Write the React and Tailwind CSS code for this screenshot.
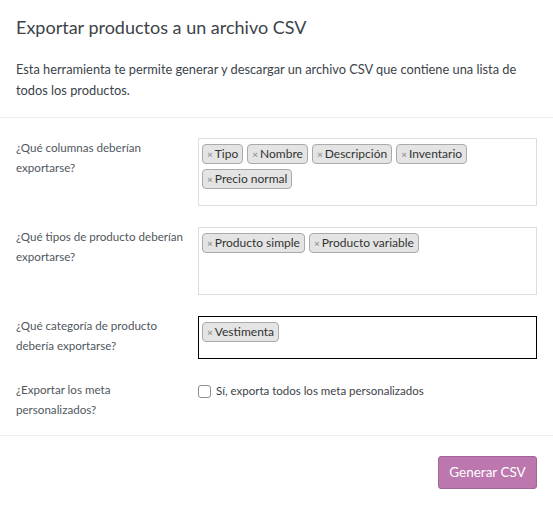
const Tag = ({ children }) => (
  <li className="flex items-center h-5 mr-1 mt-[5px] pl-1 pr-1 bg-[#e4e4e4] border border-[#aaa] rounded text-[12px] leading-none text-[#333] whitespace-nowrap">
    <span className="mr-[2px] text-[10px] text-[#999] font-bold">×</span>
    {children}
  </li>
)

const Field = ({ label, h, focused, tags }) => (
  <div className="flex">
    <div className="w-[182px] shrink-0 text-[11.6px] leading-5 text-[#50575e] whitespace-nowrap">{label}</div>
    <ul
      className={`flex flex-wrap content-start flex-1 pl-[3px] ${h} border ${
        focused ? 'border-black' : 'border-[#ddd]'
      }`}
    >
      {tags.map((t) => (
        <Tag key={t}>{t}</Tag>
      ))}
    </ul>
  </div>
)

export default function App() {
  return (
    <div className="w-[553px] h-[505px] bg-white font-['Lato',sans-serif]">
      <header className="px-4 pt-[13px] pb-4 border-b border-[#eee]">
        <h2 className="text-[18px] leading-7 text-[#3c434a] whitespace-nowrap">Exportar productos a un archivo CSV</h2>
        <p className="mt-[18px] text-[12.8px] leading-[21px] text-[#3c434a] whitespace-nowrap">
          Esta herramienta te permite generar y descargar un archivo CSV que contiene una lista de
          <br />
          todos los productos.
        </p>
      </header>

      <section className="flex flex-col gap-[21px] px-4 pt-5 pb-[15px] border-b border-[#eee]">
        <Field
          label={<>¿Qué columnas deberían<br />exportarse?</>}
          h="h-[68px]"
          tags={['Tipo', 'Nombre', 'Descripción', 'Inventario', 'Precio normal']}
        />
        <Field
          label={<>¿Qué tipos de producto deberían<br />exportarse?</>}
          h="h-[68px]"
          tags={['Producto simple', 'Producto variable']}
        />
        <Field
          label={<>¿Qué categoría de producto<br />debería exportarse?</>}
          h="h-[43px]"
          focused
          tags={['Vestimenta']}
        />
        <div className="flex">
          <div className="w-[182px] shrink-0 text-[11.6px] leading-5 text-[#50575e] whitespace-nowrap">
            ¿Exportar los meta
            <br />
            personalizados?
          </div>
          <label className="flex items-center gap-[5px] h-[22px] text-[11.5px] text-[#3c434a] whitespace-nowrap">
            <span className="w-[13px] h-[13px] border border-[#8c8f94] rounded-[3px] bg-white"></span>
            Sí, exporta todos los meta personalizados
          </label>
        </div>
      </section>

      <footer className="flex justify-end px-4 pt-5 pb-[15px]">
        <button className="w-[99px] h-[33px] bg-[#bb77ae] border border-[#a36597] rounded-[3px] text-[13.5px] text-white">
          Generar CSV
        </button>
      </footer>
    </div>
  )
}
